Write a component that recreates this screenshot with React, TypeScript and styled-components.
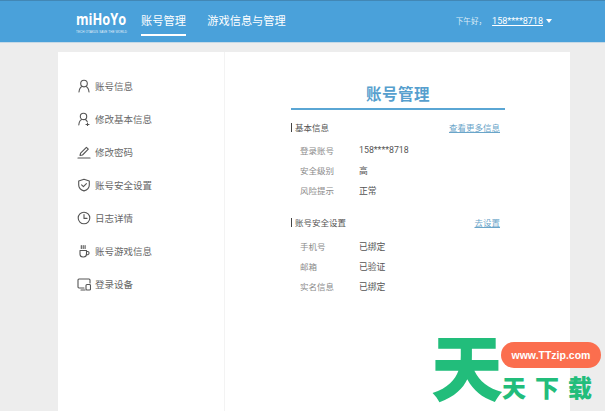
import React from "react";
import styled, { createGlobalStyle } from "styled-components";

const CJK = `"Noto Sans CJK SC", "Noto Sans", sans-serif`;

const GlobalStyle = createGlobalStyle`
  html, body {
    margin: 0;
    padding: 0;
    height: 100%;
    overflow: hidden;
    background: #eeeeee;
    font-family: ${CJK};
  }
`;

const Page = styled.div`
  position: relative;
  width: 605px;
  height: 411px;
  overflow: hidden;
  background: #ededed;
`;

const Header = styled.header`
  display: flex;
  align-items: stretch;
  height: 41px;
  padding-left: 76px;
  padding-right: 53px;
  background: #4aa1da;
  border-top: 1px solid #4287b5;
  border-bottom: 1px solid #c6d9e6;
  color: #fff;
`;

const Logo = styled.div`
  display: flex;
  flex-direction: column;
  justify-content: center;
  width: 65px;
  padding-top: 1px;
`;

const LogoWord = styled.span`
  font-family: "Open Sans", sans-serif;
  font-size: 16px;
  font-weight: 700;
  line-height: 17px;
  transform: scaleX(0.8);
  transform-origin: left center;
`;

const LogoTag = styled.span`
  width: 52px;
  margin-top: 2px;
  overflow: hidden;
  font-family: "Liberation Sans", sans-serif;
  font-size: 3px;
  line-height: 4px;
  letter-spacing: 0.1px;
  white-space: nowrap;
  opacity: 0.85;
`;

const NavTab = styled.a<{ $active?: boolean; $width: number }>`
  position: relative;
  display: flex;
  align-items: center;
  justify-content: center;
  width: ${(p) => p.$width}px;
  margin-right: 21px;
  padding-bottom: 4px;
  box-sizing: border-box;
  font-size: 11.2px;
  white-space: nowrap;
  &::after {
    content: "";
    display: ${(p) => (p.$active ? "block" : "none")};
    position: absolute;
    left: 0;
    right: 0;
    bottom: 6px;
    height: 2px;
    background: #fff;
  }
`;

const UserArea = styled.div`
  display: flex;
  align-items: center;
  gap: 3px;
  margin-left: auto;
  padding-bottom: 2px;
  font-size: 7.6px;
`;

const Greeting = styled.span`
  color: #dcecf7;
  margin-right: 3px;
`;

const UserLink = styled.a`
  font-family: Roboto, ${CJK};
  font-size: 9px;
  text-decoration: underline;
`;

const Caret = styled.span`
  width: 0;
  height: 0;
  border-left: 3px solid transparent;
  border-right: 3px solid transparent;
  border-top: 4px solid #fff;
`;

const Card = styled.main`
  display: flex;
  width: 512px;
  height: 359px;
  margin: 9px 0 0 58px;
  background: #fff;
`;

const Sidebar = styled.nav`
  display: flex;
  flex-direction: column;
  width: 167px;
  padding-top: 17px;
  box-sizing: border-box;
  border-right: 1px solid #f3f3f3;
`;

const SideItem = styled.a`
  display: flex;
  align-items: center;
  height: 33px;
  padding-left: 19px;
  color: #666;
  font-size: 9.5px;
  white-space: nowrap;
`;

const SideIcon = styled.svg`
  flex: none;
  width: 14px;
  height: 14px;
  margin-right: 4px;
  fill: none;
  stroke: #555;
  stroke-width: 1.1;
  stroke-linecap: round;
  stroke-linejoin: round;
`;

const Content = styled.section`
  display: flex;
  flex-direction: column;
  flex: 1;
  padding: 28px 65px 0 66px;
`;

const Title = styled.h1`
  margin: 0;
  height: 28px;
  border-bottom: 2px solid #5aa6d4;
  color: #579fce;
  font-size: 15.5px;
  font-weight: 700;
  line-height: 27px;
  letter-spacing: 0.5px;
  text-align: center;
`;

const SectionHead = styled.div<{ $top: number }>`
  display: flex;
  align-items: center;
  justify-content: space-between;
  margin-top: ${(p) => p.$top}px;
  padding-right: 5px;
  height: 14px;
`;

const SectionName = styled.h2`
  margin: 0;
  padding-left: 3px;
  border-left: 1px solid #444;
  color: #555;
  font-size: 8.5px;
  font-weight: 400;
  line-height: 9px;
`;

const SectionLink = styled.a`
  color: #6aa5c9;
  font-size: 8.5px;
  text-decoration: underline;
`;

const Rows = styled.div<{ $top: number }>`
  display: flex;
  flex-direction: column;
  gap: 6px;
  margin-top: ${(p) => p.$top}px;
  padding-left: 9px;
`;

const Row = styled.div`
  display: grid;
  grid-template-columns: 59px 1fr;
  align-items: center;
  height: 14px;
  font-size: 8.5px;
`;

const RowLabel = styled.span`
  color: #8b8b8b;
`;

const RowValue = styled.span`
  color: #555;
  font-family: Roboto, ${CJK};
  font-size: 8.8px;
`;

const Watermark = styled.div`
  position: absolute;
  left: 431px;
  top: 333px;
  width: 174px;
  height: 78px;
`;

const BigGlyph = styled.span`
  position: absolute;
  left: 0;
  top: -5px;
  color: #22bd7b;
  font-size: 72px;
  font-weight: 900;
  line-height: 72px;
`;

const Pill = styled.span`
  position: absolute;
  left: 70px;
  top: 9px;
  width: 100px;
  height: 26px;
  border-radius: 13px;
  background: #fb6e4e;
  color: #fff;
  font-family: "Liberation Sans", sans-serif;
  font-size: 10.5px;
  font-weight: 700;
  line-height: 26px;
  text-align: center;
`;

const SmallGlyphs = styled.span`
  position: absolute;
  left: 71px;
  top: 38px;
  display: flex;
  gap: 9px;
  color: #22bd7b;
  font-size: 24px;
  font-weight: 900;
  line-height: 32px;
  white-space: nowrap;
`;

const icons: Record<string, React.ReactNode> = {
  user: (
    <>
      <circle cx="7" cy="4.6" r="3.3" />
      <path d="M2 13c.3-3 2-5 3.2-5.4M12 13c-.3-3-2-5-3.2-5.4" />
    </>
  ),
  userAdd: (
    <>
      <circle cx="6.5" cy="4.4" r="3.2" />
      <path d="M1.8 13c.3-3 1.8-5 3-5.4M8.2 7.6c.8.3 1.5 1 2 2M10.5 11v3M9 12.5h3" />
    </>
  ),
  pen: (
    <>
      <path d="M3 10.5l.6-2.4 5.8-5.8 1.9 1.9-5.8 5.8z" />
      <path d="M1 13h12" strokeWidth="1.2" />
    </>
  ),
  shield: (
    <>
      <path d="M7 1.3l5.3 1.7v4c0 3-2.3 5-5.3 5.9C4 12 1.7 10 1.7 7V3z" />
      <path d="M4.6 6.8l1.8 1.8 3-3" />
    </>
  ),
  clock: (
    <>
      <circle cx="7" cy="7" r="5.8" />
      <path d="M7 3.5V7.4h3" />
    </>
  ),
  cup: (
    <>
      <path d="M3 6.5h6.5v3.5a3 3 0 0 1-3 3h-.5a3 3 0 0 1-3-3z" />
      <path d="M9.5 7.5h1a1.4 1.4 0 0 1 0 3.2h-1.2M4.3 1.5v3M6.2 1.5v3M8.1 1.5v3" />
    </>
  ),
  device: (
    <>
      <path d="M7 11H2a1 1 0 0 1-1-1V3a1 1 0 0 1 1-1h10a1 1 0 0 1 1 1v3" />
      <rect x="9" y="7.5" width="4.5" height="5.5" rx="1" />
      <path d="M4 13h4" />
    </>
  ),
};

const menu = [
  { icon: "user", label: "账号信息" },
  { icon: "userAdd", label: "修改基本信息" },
  { icon: "pen", label: "修改密码" },
  { icon: "shield", label: "账号安全设置" },
  { icon: "clock", label: "日志详情" },
  { icon: "cup", label: "账号游戏信息" },
  { icon: "device", label: "登录设备" },
];

const basicInfo = [
  ["登录账号", "158****8718"],
  ["安全级别", "高"],
  ["风险提示", "正常"],
];

const securityInfo = [
  ["手机号", "已绑定"],
  ["邮箱", "已验证"],
  ["实名信息", "已绑定"],
];

const App = () => {
  return (
    <Page>
      <GlobalStyle />
      <Header>
        <Logo>
          <LogoWord>miHoYo</LogoWord>
          <LogoTag>TECH OTAKUS SAVE THE WORLD</LogoTag>
        </Logo>
        <NavTab $active $width={45}>
          账号管理
        </NavTab>
        <NavTab $width={79}>游戏信息与管理</NavTab>
        <UserArea>
          <Greeting>下午好，</Greeting>
          <UserLink>158****8718</UserLink>
          <Caret />
        </UserArea>
      </Header>
      <Card>
        <Sidebar>
          {menu.map((item) => (
            <SideItem key={item.label}>
              <SideIcon viewBox="0 0 14 14">{icons[item.icon]}</SideIcon>
              {item.label}
            </SideItem>
          ))}
        </Sidebar>
        <Content>
          <Title>账号管理</Title>
          <SectionHead $top={10}>
            <SectionName>基本信息</SectionName>
            <SectionLink>查看更多信息</SectionLink>
          </SectionHead>
          <Rows $top={9}>
            {basicInfo.map(([label, value]) => (
              <Row key={label}>
                <RowLabel>{label}</RowLabel>
                <RowValue>{value}</RowValue>
              </Row>
            ))}
          </Rows>
          <SectionHead $top={18}>
            <SectionName>账号安全设置</SectionName>
            <SectionLink>去设置</SectionLink>
          </SectionHead>
          <Rows $top={10}>
            {securityInfo.map(([label, value]) => (
              <Row key={label}>
                <RowLabel>{label}</RowLabel>
                <RowValue>{value}</RowValue>
              </Row>
            ))}
          </Rows>
        </Content>
      </Card>
      <Watermark>
        <BigGlyph>天</BigGlyph>
        <Pill>www.TTzip.com</Pill>
        <SmallGlyphs>
          <span>天</span>
          <span>下</span>
          <span>载</span>
        </SmallGlyphs>
      </Watermark>
    </Page>
  );
};

export default App;
